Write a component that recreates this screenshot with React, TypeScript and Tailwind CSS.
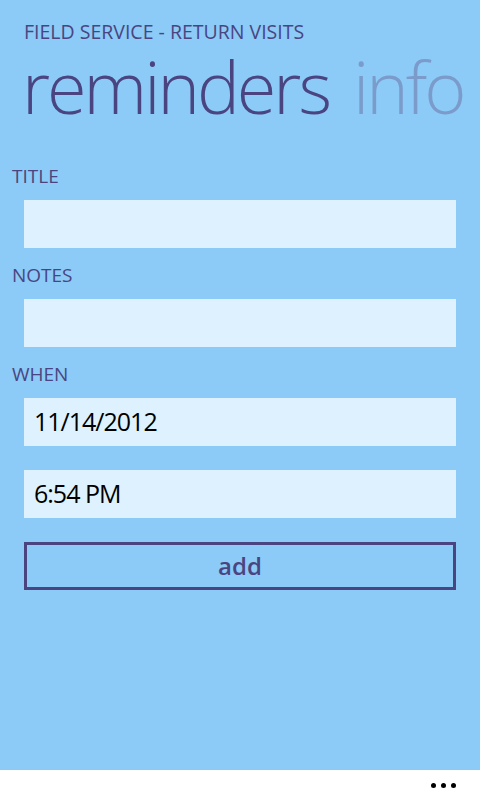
import React from 'react';

const labelCls = "text-[19px] leading-[24px] text-[#4a4580] uppercase px-3";
const boxCls = "mx-6 h-12 bg-[#def1fe] flex items-center px-[10px] text-[25px] tracking-[-1px] text-black";

export default function App() {
    return (
        <div className="h-[800px] flex flex-col bg-[#8ccaf7]" style={{ fontFamily: '"Open Sans", "Noto Sans", sans-serif' }}>
            <div className="flex-1 overflow-hidden">
                <div className="pt-[20px] pl-6 text-[19.5px] leading-[24px] text-[#4a4580]">FIELD SERVICE - RETURN VISITS</div>
                <div className="flex whitespace-nowrap pl-[22px] text-[72px] leading-[84px] font-light tracking-[-3px]">
                    <span className="text-[#4a4580]">reminders</span>
                    <span className="ml-[24px] text-[#7b9ccb]">info</span>
                </div>

                <div className="mt-[36px] flex flex-col">
                    <div className={labelCls}>TITLE</div>
                    <div className={`${boxCls} mt-[12px]`}></div>

                    <div className={`${labelCls} mt-[15px]`}>NOTES</div>
                    <div className={`${boxCls} mt-[12px]`}></div>

                    <div className={`${labelCls} mt-[15px]`}>WHEN</div>
                    <div className={`${boxCls} mt-[12px]`}>11/14/2012</div>
                    <div className={`${boxCls} mt-[24px]`}>6:54 PM</div>

                    <button className="mx-6 mt-[24px] h-12 border-[3px] border-[#4a4580] text-[#4a4580] text-[24px] font-semibold flex items-center justify-center">
                        add
                    </button>
                </div>
            </div>
            <div className="h-[30px] bg-white flex items-center justify-end pr-[24px] gap-[5px]">
                <span className="w-[5px] h-[5px] rounded-full bg-black"></span>
                <span className="w-[5px] h-[5px] rounded-full bg-black"></span>
                <span className="w-[5px] h-[5px] rounded-full bg-black"></span>
            </div>
        </div>
    );
}
